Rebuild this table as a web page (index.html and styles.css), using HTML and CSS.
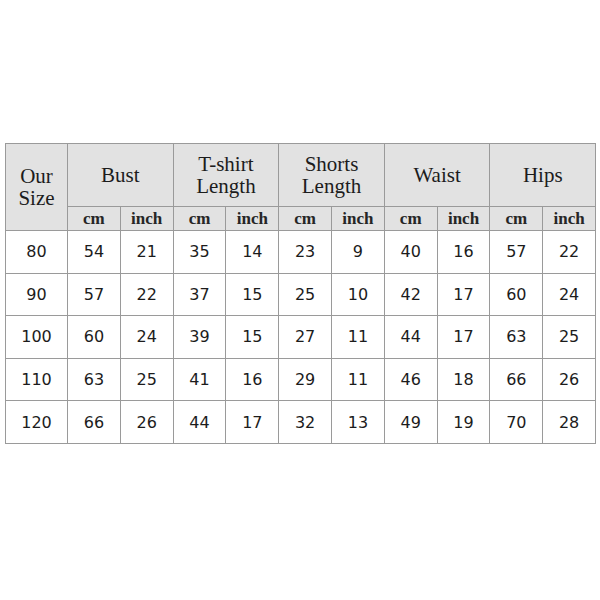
FILE: index.html
```html
<!DOCTYPE html>
<html>
<head>
<meta charset="utf-8">
<link rel="stylesheet" href="styles.css">
</head>
<body>
<div class="page">
<table class="chart">
<colgroup>
<col class="c-first">
<col><col><col><col><col><col><col><col><col><col>
</colgroup>
<thead>
<tr class="h1">
<th rowspan="2" class="size">Our<br>Size</th>
<th colspan="2">Bust</th>
<th colspan="2">T-shirt<br>Length</th>
<th colspan="2">Shorts<br>Length</th>
<th colspan="2">Waist</th>
<th colspan="2">Hips</th>
</tr>
<tr class="h2">
<th>cm</th><th>inch</th>
<th>cm</th><th>inch</th>
<th>cm</th><th>inch</th>
<th>cm</th><th>inch</th>
<th>cm</th><th>inch</th>
</tr>
</thead>
<tbody>
<tr><td>80</td><td>54</td><td>21</td><td>35</td><td>14</td><td>23</td><td>9</td><td>40</td><td>16</td><td>57</td><td>22</td></tr>
<tr><td>90</td><td>57</td><td>22</td><td>37</td><td>15</td><td>25</td><td>10</td><td>42</td><td>17</td><td>60</td><td>24</td></tr>
<tr><td>100</td><td>60</td><td>24</td><td>39</td><td>15</td><td>27</td><td>11</td><td>44</td><td>17</td><td>63</td><td>25</td></tr>
<tr><td>110</td><td>63</td><td>25</td><td>41</td><td>16</td><td>29</td><td>11</td><td>46</td><td>18</td><td>66</td><td>26</td></tr>
<tr><td>120</td><td>66</td><td>26</td><td>44</td><td>17</td><td>32</td><td>13</td><td>49</td><td>19</td><td>70</td><td>28</td></tr>
</tbody>
</table>
</div>
</body>
</html>
```
FILE: styles.css
```css
html, body {
  margin: 0;
  padding: 0;
  background: #ffffff;
}
.page {
  padding: 143px 5px 0 5px;
}
.chart {
  width: 590px;
  table-layout: fixed;
  border-collapse: collapse;
  color: #1c1c1c;
}
.chart col { width: 52.8px; }
.chart col.c-first { width: 62px; }
.chart th, .chart td {
  border: 1px solid #9a9a9a;
  padding: 0;
  text-align: center;
}
.chart th {
  background: #e2e2e2;
  font-family: "Liberation Serif", serif;
  font-weight: normal;
}
.h1 th {
  height: 62px;
  font-size: 21px;
  line-height: 22px;
}
.h1 th.size { line-height: 22px; }
.h2 th {
  height: 23px;
  font-size: 17px;
  font-weight: bold;
  line-height: 18px;
  color: #262626;
}
.chart td {
  height: 41.6px;
  font-family: "DejaVu Sans", sans-serif;
  font-size: 16px;
}
```
